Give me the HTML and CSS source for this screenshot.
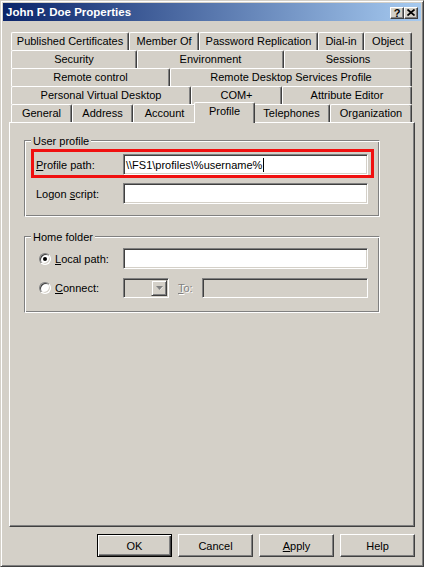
FILE: index.html
```html
<!DOCTYPE html>
<html>
<head>
<meta charset="utf-8">
<title>John P. Doe Properties</title>
<link rel="stylesheet" href="styles.css">
</head>
<body>
<div class="window">
  <div class="caption">
    <span class="title">John P. Doe Properties</span>
    <div class="cap-buttons">
      <span class="cap-btn help">?</span>
      <span class="cap-btn close"><svg width="8" height="7" viewBox="0 0 8 7"><path d="M0.5 0.5 L7.5 6.5 M7.5 0.5 L0.5 6.5" stroke="#000" stroke-width="1.7" fill="none"/></svg></span>
    </div>
  </div>

  <div class="tabs">
    <div class="tabrow r1">
      <span class="tab">Published Certificates</span>
      <span class="tab">Member Of</span>
      <span class="tab">Password Replication</span>
      <span class="tab">Dial-in</span>
      <span class="tab">Object</span>
    </div>
    <div class="tabrow r2">
      <span class="tab">Security</span>
      <span class="tab">Environment</span>
      <span class="tab">Sessions</span>
    </div>
    <div class="tabrow r3">
      <span class="tab">Remote control</span>
      <span class="tab">Remote Desktop Services Profile</span>
    </div>
    <div class="tabrow r4">
      <span class="tab">Personal Virtual Desktop</span>
      <span class="tab">COM+</span>
      <span class="tab">Attribute Editor</span>
    </div>
    <div class="tabrow r5">
      <span class="tab">General</span>
      <span class="tab">Address</span>
      <span class="tab">Account</span>
      <span class="tab sel">Profile</span>
      <span class="tab">Telephones</span>
      <span class="tab">Organization</span>
    </div>
  </div>

  <div class="panel">
    <div class="group g1">
      <div class="legend">User profile</div>
      <div class="row">
        <span class="lbl"><u>P</u>rofile path:</span>
        <div class="input">\\FS1\profiles\%username%<span class="caret"></span></div>
      </div>
      <div class="row">
        <span class="lbl">Logon <u>s</u>cript:</span>
        <div class="input"></div>
      </div>
      <div class="mark"></div>
    </div>

    <div class="group g2">
      <div class="legend">Home folder</div>
      <div class="row">
        <span class="radio checked"></span>
        <span class="rlbl"><u>L</u>ocal path:</span>
        <div class="input"></div>
      </div>
      <div class="row short">
        <span class="radio"></span>
        <span class="rlbl"><u>C</u>onnect:</span>
        <div class="combo"><span class="dd"><svg width="7" height="5" viewBox="0 0 7 5"><path d="M1 1 L7 1 L4 4 Z" fill="#fff"/><path d="M0 0 L7 0 L3.5 4 Z" fill="#808080"/></svg></span></div>
        <span class="to"><u>T</u>o:</span>
        <div class="input disabled wide"></div>
      </div>
    </div>
  </div>

  <div class="buttons">
    <span class="btn default">OK</span>
    <span class="btn">Cancel</span>
    <span class="btn"><u>A</u>pply</span>
    <span class="btn">Help</span>
  </div>
</div>
</body>
</html>
```

FILE: styles.css
```css
* { box-sizing: border-box; }
html, body { margin: 0; padding: 0; }
body {
  width: 424px;
  height: 567px;
  overflow: hidden;
  background: #d4d0c8;
  font-family: "Liberation Sans", Arial, sans-serif;
  font-size: 11px;
  color: #000;
}
u { text-underline-offset: 1px; }

.window {
  width: 424px;
  height: 567px;
  background: #d4d0c8;
  border: 1px solid;
  border-color: #d4d0c8 #404040 #404040 #d4d0c8;
  box-shadow: inset 1px 1px #fff, inset -1px -1px #808080;
  padding: 2px;
  display: flex;
  flex-direction: column;
}

/* caption */
.caption {
  flex: none;
  height: 18px;
  background: linear-gradient(to right, #0a246a, #a6caf0);
  display: flex;
  align-items: center;
  justify-content: space-between;
  padding: 0 3px 0 3px;
}
.title {
  color: #fff;
  font-weight: bold;
  font-size: 11.5px;
  white-space: nowrap;
}
.cap-buttons { display: flex; margin-top: 1px; }
.cap-btn {
  width: 14px;
  height: 12px;
  background: #d4d0c8;
  border: 1px solid;
  border-color: #fff #404040 #404040 #fff;
  box-shadow: inset -1px -1px #808080;
  display: flex;
  align-items: center;
  justify-content: center;
  font-weight: bold;
  font-size: 11px;
  line-height: 10px;
}

/* tabs */
.tabs {
  flex: none;
  margin: 11px 0 0 8px;
  width: 401px;
}
.tabrow {
  display: grid;
  height: 18px;
}
.r1 { grid-template-columns: 118px 70px 119px 46px 48px; }
.r2 { grid-template-columns: 126px 147px 128px; }
.r3 { grid-template-columns: 159px 242px; }
.r4 { grid-template-columns: 180px 91px 130px; }
.r5 { grid-template-columns: 61px 61px 63px 57px 77px 82px; }
.tab {
  background: #d4d0c8;
  border-top: 1px solid #fff;
  border-left: 1px solid #fff;
  border-right: 1px solid #404040;
  box-shadow: inset -1px 0 #808080;
  border-radius: 2px 2px 0 0;
  text-align: center;
  line-height: 16px;
  white-space: nowrap;
  overflow: hidden;
}
.tab.sel {
  margin: -2px -2px -1px;
  position: relative;
  z-index: 1;
}

/* panel */
.panel {
  flex: none;
  margin-left: 6px;
  width: 406px;
  height: 405px;
  border: 1px solid;
  border-color: #fff #404040 #404040 #fff;
  box-shadow: inset -1px -1px #808080;
  padding: 17px 0 0 14px;
}
.group {
  position: relative;
  width: 356px;
  height: 77px;
  border: 1px solid;
  border-color: #808080 #fff #fff #808080;
  box-shadow: inset 1px 1px #fff, inset -1px -1px #808080;
  padding: 0 0 0 11px;
}
.g2 { margin-top: 19px; }
.legend {
  width: max-content;
  margin: -6px 0 0 -5px;
  padding: 0 2px;
  background: #d4d0c8;
  line-height: 13px;
}
.row {
  display: flex;
  align-items: center;
  height: 21px;
  margin-top: 8px;
}
.g1 .legend + .row { margin-top: 6px; }
.g2 .legend + .row { margin-top: 4px; }
.row.short { height: 20px; margin-top: 9px; }
.lbl { width: 87px; flex: none; white-space: nowrap; }
.rlbl { width: 68px; flex: none; white-space: nowrap; }

.input {
  width: 245px;
  height: 21px;
  flex: none;
  background: #fff;
  border: 1px solid;
  border-color: #808080 #fff #fff #808080;
  box-shadow: inset 1px 1px #404040, inset -1px -1px #d4d0c8;
  padding: 0 2px;
  display: flex;
  align-items: center;
  white-space: nowrap;
}
.input.disabled { background: #d4d0c8; height: 20px; }
.input.wide { width: 166px; }
.caret {
  display: inline-block;
  width: 1px;
  height: 14px;
  background: #000;
  margin-left: 1px;
}

.radio {
  width: 12px;
  height: 12px;
  flex: none;
  margin: 0 4px 0 3px;
  border-radius: 50%;
  border: 1px solid;
  border-color: #808080 #fff #fff #808080;
  box-shadow: inset 1px 1px #404040, inset -1px -1px #d4d0c8;
  background: #fff;
  display: flex;
  align-items: center;
  justify-content: center;
}
.radio.checked::after {
  content: "";
  width: 4px;
  height: 4px;
  border-radius: 50%;
  background: #000;
}

.combo {
  width: 46px;
  height: 20px;
  flex: none;
  background: #d4d0c8;
  border: 1px solid;
  border-color: #808080 #fff #fff #808080;
  box-shadow: inset 1px 1px #404040, inset -1px -1px #d4d0c8;
  display: flex;
  justify-content: flex-end;
  align-items: center;
  padding-right: 1px;
}
.dd {
  width: 16px;
  height: 16px;
  background: #d4d0c8;
  border: 1px solid;
  border-color: #d4d0c8 #404040 #404040 #d4d0c8;
  box-shadow: inset 1px 1px #fff, inset -1px -1px #808080;
  display: flex;
  align-items: center;
  justify-content: center;
}
.to {
  width: 24px;
  margin-left: 9px;
  flex: none;
  color: #808080;
  text-shadow: 1px 1px #fff;
}

/* annotation */
.mark {
  position: absolute;
  left: 6px;
  top: 8px;
  width: 343px;
  height: 29px;
  border: 3px solid #f01010;
  pointer-events: none;
}

/* buttons */
.buttons {
  flex: none;
  display: flex;
  justify-content: flex-end;
  gap: 6px;
  margin-top: 7px;
  padding-right: 6px;
}
.btn {
  width: 75px;
  height: 23px;
  display: flex;
  align-items: center;
  justify-content: center;
  border: 1px solid;
  border-color: #fff #404040 #404040 #fff;
  box-shadow: inset -1px -1px #808080;
  background: #d4d0c8;
}
.btn.default {
  border-color: #000;
  box-shadow: inset 1px 1px #fff, inset -1px -1px #404040, inset -2px -2px #808080;
}
```
